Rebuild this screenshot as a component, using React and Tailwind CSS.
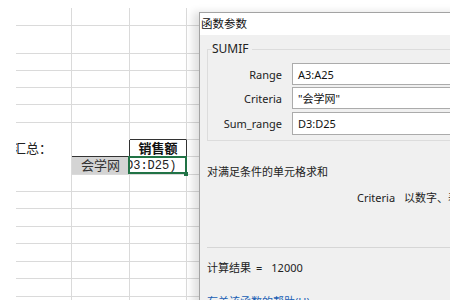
import React from 'react'

const CJK = "font-['Noto_Sans','Noto_Sans_CJK_SC',sans-serif]"
const LINE = 'border-[#dadada]'

// row heights incl. bottom border, starting at y=8
const HEIGHTS = [18, 28, 17, 17, 17, 18, 17, 17, 18, 17, 17, 18, 17, 18, 17, 18, 10]

function Cell({ w, className = '', children }) {
  return <div className={`shrink-0 h-full ${w} ${className}`}>{children}</div>
}

function SheetRow({ i, h }) {
  const last = i === HEIGHTS.length - 1
  const bb = last ? '' : `border-b ${LINE}`

  if (i === 6) {
    return (
      <div className="flex" style={{ height: h }}>
        <Cell w="w-[56px]" className={`border-r ${LINE}`} />
        <Cell w="w-[58px]" className={`border-r ${LINE}`} />
        <Cell w="w-[57px]" className={`border-r ${LINE} border-b-[#333] border-b`} />
        <Cell w="w-[20px]" className={bb} />
      </div>
    )
  }
  if (i === 7) {
    return (
      <div className="flex" style={{ height: h }}>
        <Cell w="w-[56px]" className={`border-r ${LINE} flex items-center`}>
          <span className={`${CJK} text-[13px] leading-none text-[#222] whitespace-nowrap ml-[-3px]`}>汇总：</span>
        </Cell>
        <Cell w="w-[58px]" className="border-r border-b border-[#333]" />
        <Cell w="w-[57px]" className="border-r border-b border-[#333] flex items-center justify-center">
          <span className={`${CJK} text-[13px] font-bold leading-none text-[#111]`}>销售额</span>
        </Cell>
        <Cell w="w-[20px]" className={bb} />
      </div>
    )
  }
  if (i === 8) {
    return (
      <div className="flex" style={{ height: h }}>
        <Cell w="w-[56px]" className={`border-r ${LINE}`} />
        <Cell w="w-[58px]" className={`border-r border-b ${LINE} bg-[#d4d4d4] flex items-center justify-center`}>
          <span className={`${CJK} text-[13px] leading-none text-[#333]`}>会学网</span>
        </Cell>
        <Cell w="w-[57px]" className={`relative border-r border-b ${LINE}`}>
          <div className="h-full overflow-hidden flex items-center">
            <span className="font-['Liberation_Mono',monospace] text-[12px] leading-none text-[#222] whitespace-nowrap ml-[-4px]">D3:D25)</span>
          </div>
          <div className="absolute -left-[2px] -top-[1px] -right-[1px] bottom-0 border-2 border-[#217346]" />
          <div className="absolute -right-[2px] -bottom-[2px] w-[4px] h-[4px] bg-[#217346]" />
        </Cell>
        <Cell w="w-[20px]" className={bb} />
      </div>
    )
  }
  return (
    <div className="flex" style={{ height: h }}>
      <Cell w="w-[56px]" className={`border-r ${LINE} ${bb}`} />
      <Cell w="w-[58px]" className={`border-r ${LINE} ${bb}`} />
      <Cell w="w-[57px]" className={`border-r ${LINE} ${bb}`} />
      <Cell w="w-[20px]" className={bb} />
    </div>
  )
}

function ArgRow({ label, value, className = '' }) {
  return (
    <div className={`flex items-center h-[22px] ${className}`}>
      <div className="w-[74px] text-right text-[11px] text-[#222] leading-none">{label}</div>
      <div className="ml-[10px] flex-1 h-full bg-white border border-[#ababab] flex items-center pl-[5px] text-[11px] text-[#111] leading-none">
        {value}
      </div>
    </div>
  )
}

export default function App() {
  return (
    <div className={`relative w-[450px] h-[300px] overflow-hidden bg-white ${CJK}`}>
      {/* 表格 */}
      <div className="flex pt-[8px]">
        <div className="w-[16px] shrink-0" />
        <div className="flex-1 overflow-hidden">
          {HEIGHTS.map((h, i) => <SheetRow key={i} i={i} h={h} />)}
        </div>
      </div>

      {/* 函数参数 对话框 */}
      <div className="absolute left-[199px] top-[12px] w-[330px] h-[300px] border-l border-t border-[#a3a3a3] shadow-[-6px_0_8px_rgba(0,0,0,0.12)] flex flex-col">
        <div className="h-[22px] bg-white flex items-center pl-[1px] text-[11.5px] text-[#111]">函数参数</div>
        <div className="flex-1 bg-[#f0f0f0] pl-[7px] pt-[6px]">
          <fieldset className="border border-[#dcdcdc] pb-[5px]">
            <legend className="ml-[4px] pr-[3px] text-[12px] leading-[16px] text-[#222]">SUMIF</legend>
            <ArgRow label="Range" value="A3:A25" className="mt-[6px]" />
            <ArgRow label="Criteria" value={'"会学网"'} className="mt-[2px]" />
            <ArgRow label="Sum_range" value="D3:D25" className="mt-[3px] h-[23px]" />
          </fieldset>

          <div className="mt-[23px] text-[11px] leading-[16px] text-[#222]">对满足条件的单元格求和</div>
          <div className="mt-[10px] pl-[150px] flex text-[11px] leading-[16px] text-[#222] whitespace-nowrap">
            <span>Criteria</span>
            <span className="ml-[9px]">以数字、表达式或文本形式定义的条件</span>
          </div>

          <div className="mt-[41px] border-t border-[#d6d6d6]" />
          <div className="mt-[12px] text-[11px] leading-[16px] text-[#222] whitespace-nowrap">
            计算结果<span className="ml-[5px]">=</span><span className="ml-[9px]">12000</span>
          </div>
          <div className="mt-[18px] text-[11px] leading-[16px] text-[#1a5fb4] whitespace-nowrap">有关该函数的帮助(H)</div>
        </div>
      </div>
    </div>
  )
}
